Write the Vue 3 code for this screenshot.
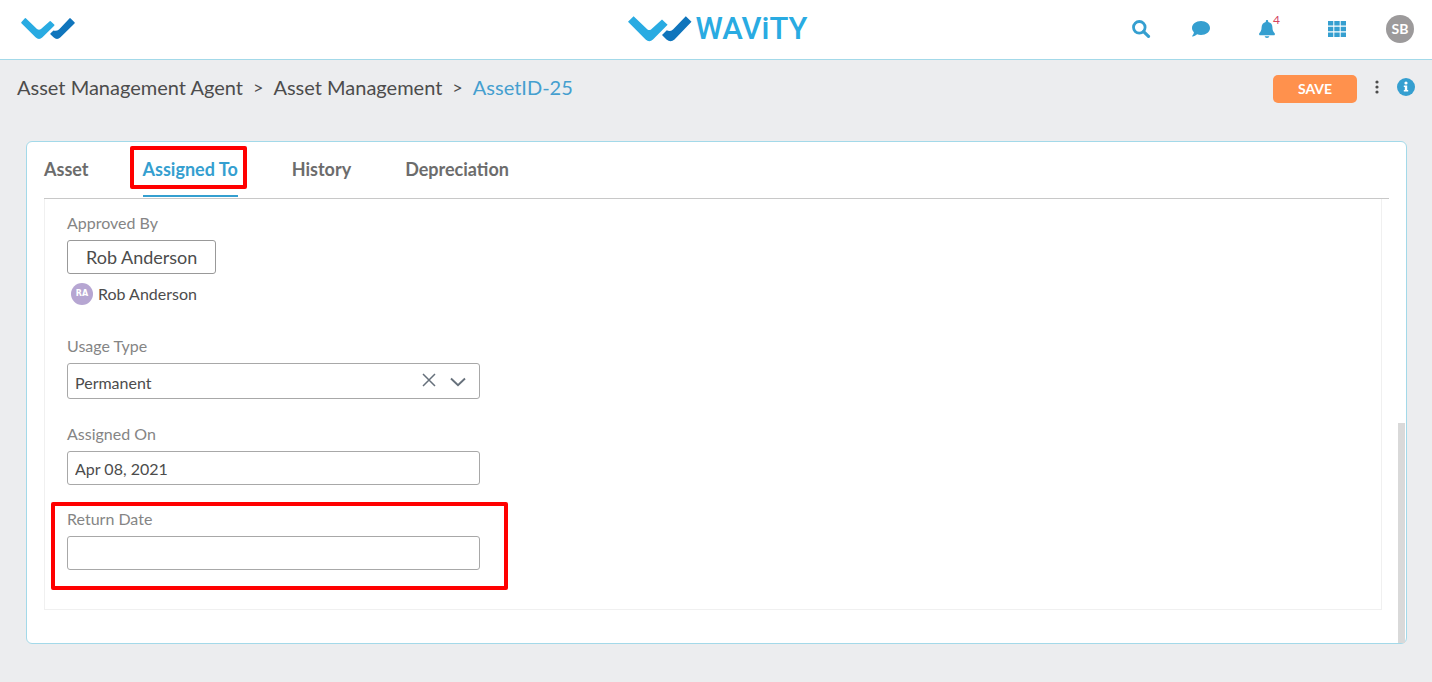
<script setup>
import { ref } from 'vue'

const tabs = ['Asset', 'Assigned To', 'History', 'Depreciation']
const active = ref('Assigned To')
const usage = ref('Permanent')
const assignedOn = ref('Apr 08, 2021')
const returnDate = ref('')
</script>

<template>
  <div class="page">
    <header class="topbar">
      <a href="#" class="mark" aria-label="Home">
        <svg width="54" height="22" viewBox="0 0 54 22">
          <path d="M3.900 0.300Q4.500 -0.100 5.100 0.400L16 10.900Q18 12.500 20 10.900L28.700 3.300Q29.400 2.800 30 3.400L33.200 6.400Q33.800 7 33.200 7.700L21.500 19.300Q18 22.600 14.500 19.300L0.400 5.200Q0 4.600 0.500 4Z" fill="#29abe2" />
          <path d="M49.400 0.300L53.500 4.200Q54 4.800 53.500 5.400L39.500 19.300Q36 22.600 32.500 19.300L29.600 16.600Q29 16 29.600 15.300L32.500 12.500Q35.500 13.400 38 11.400L48.400 0.400Q48.900 -0.100 49.400 0.300Z" fill="#1075bc" />
        </svg>
      </a>
      <a href="#" class="brand">
        <svg width="64" height="26" viewBox="0 0 64 26">
          <path d="M5.600 0.300L19.500 13.400Q21.200 14.600 23 13.400L34 3.400L39.600 8.800L25 23.600Q21.300 27 17.600 23.600L0 5.800Z" fill="#29abe2" />
          <path d="M57.800 0.300L63.500 5.700L46.500 23.600Q42.500 27 38.500 23.600L34 19L38.800 14.300Q42 16 45 13.400Z" fill="#1075bc" />
        </svg>
        <span class="brand-text">WAViTY</span>
      </a>
      <nav class="tools" aria-label="Tools">
        <button type="button" class="icon" aria-label="Search">
          <svg width="20" height="18" viewBox="0 0 20 18"><circle cx="7.300" cy="7.300" r="5.800" fill="none" stroke="#359fd0" stroke-width="2.800" /><path d="M11.600 11.600L16.500 16.300" stroke="#359fd0" stroke-width="3.200" stroke-linecap="round" /></svg>
        </button>
        <button type="button" class="icon" aria-label="Messages">
          <svg width="18" height="16" viewBox="0 0 18 16"><path d="M9 0C14 0 18 3.100 18 7S14 14 9 14C7.600 14 6.200 13.700 5.100 13.300C3.900 14.400 2.200 15.600 0.400 15.600C0 15.600 0 15.100 0.200 14.900C1.100 14 1.800 12.500 1.900 11.300C0.700 10.100 0 8.600 0 7C0 3.100 4 0 9 0Z" fill="#359fd0" /></svg>
        </button>
        <button type="button" class="icon bell" aria-label="Notifications">
          <svg width="16" height="18" viewBox="0 0 16 18"><path d="M8 0C8.700 0 9.200 0.500 9.200 1.200V1.900C11.700 2.400 13.400 4.500 13.400 7.300C13.400 10.600 14.300 11.600 15.500 12.900C16.300 13.800 15.900 15.300 14.800 15.300H1.200C0.100 15.300-0.300 13.800 0.500 12.900C1.700 11.600 2.600 10.600 2.600 7.300C2.600 4.500 4.300 2.400 6.800 1.900V1.200C6.800 0.500 7.300 0 8 0ZM5.700 16.300H10.300C10.100 17.400 9.200 18 8 18S5.900 17.400 5.700 16.300Z" fill="#359fd0" /></svg>
          <span class="count">4</span>
        </button>
        <button type="button" class="icon" aria-label="Apps">
          <svg width="18" height="16" viewBox="0 0 18 16" fill="#359fd0"><path d="M0 0h5.300v4.500H0zM6.300 0h5.400v4.500H6.300zM12.700 0h5.300v4.500h-5.300zM0 5.700h5.300v4.600H0zM6.300 5.700h5.400v4.600H6.300zM12.700 5.700h5.300v4.600h-5.300zM0 11.500h5.300V16H0zM6.300 11.500h5.400V16H6.300zM12.700 11.500h5.300V16h-5.300z" /></svg>
        </button>
        <button type="button" class="avatar">SB</button>
      </nav>
    </header>

    <div class="subbar">
      <nav class="crumbs" aria-label="Breadcrumb">
        <a href="#">Asset Management Agent</a>
        <span class="sep">&gt;</span>
        <a href="#">Asset Management</a>
        <span class="sep">&gt;</span>
        <a href="#" class="current">AssetID-25</a>
      </nav>
      <div class="actions">
        <button type="button" class="save">SAVE</button>
        <button type="button" class="icon more" aria-label="More">
          <svg width="4" height="14" viewBox="0 0 4 14" fill="#4c4c4c"><circle cx="2" cy="2" r="1.600" /><circle cx="2" cy="7" r="1.600" /><circle cx="2" cy="12" r="1.600" /></svg>
        </button>
        <button type="button" class="icon" aria-label="Info">
          <svg width="18" height="18" viewBox="0 0 18 18"><circle cx="9" cy="9" r="9" fill="#359fd0" /><circle cx="9" cy="5" r="1.600" fill="#fff" /><path d="M6.800 7.500H10.200V12H11.200V13.600H6.800V12H7.800V9.100H6.800Z" fill="#fff" /></svg>
        </button>
      </div>
    </div>

    <main class="card">
      <div class="tabs" role="tablist">
        <button
          v-for="t in tabs"
          :key="t"
          type="button"
          role="tab"
          :aria-selected="t === active"
          :class="['tab', { active: t === active }]"
          @click="active = t"
        >{{ t }}<span v-if="t === 'Assigned To'" class="callout tab-callout"></span></button>
      </div>
      <form class="panel" @submit.prevent>
        <div class="field approver">
          <label for="approved">Approved By</label>
          <button id="approved" type="button" class="person">Rob Anderson</button>
          <div class="chip"><span class="initials">RA</span>Rob Anderson</div>
        </div>
        <div class="field">
          <label for="usage">Usage Type</label>
          <div class="select-wrap">
            <select id="usage" v-model="usage">
              <option value=""></option>
              <option>Permanent</option>
              <option>Temporary</option>
            </select>
            <button type="button" class="icon clear" aria-label="Clear" @click="usage = ''">
              <svg width="14" height="14" viewBox="0 0 14 14"><path d="M1 1L13 13M13 1L1 13" stroke="#66707b" stroke-width="1.500" /></svg>
            </button>
            <svg class="chevron" width="16" height="10" viewBox="0 0 16 10"><path d="M1 1.500L8 8.300L15 1.500" fill="none" stroke="#66707b" stroke-width="1.900" /></svg>
          </div>
        </div>
        <div class="field">
          <label for="assigned">Assigned On</label>
          <input id="assigned" v-model="assignedOn" type="text" />
        </div>
        <div class="field">
          <label for="return">Return Date</label>
          <input id="return" v-model="returnDate" type="text" />
          <span class="callout field-callout"></span>
        </div>
      </form>
      <span class="thumb"></span>
    </main>
  </div>
</template>

<style>
body {
  background: #ecedef;
}
</style>

<style scoped>
.page {
  font-family: Lato, "Liberation Sans", sans-serif;
  color: #4c4c4c;
  font-size: 16px;
  line-height: 20px;
  padding-bottom: 38px;
}
.page *,
.page {
  box-sizing: border-box;
}
button,
input,
select {
  font: inherit;
  color: inherit;
  margin: 0;
}
button {
  border: 0;
  background: none;
  padding: 0;
  cursor: pointer;
}
a {
  color: inherit;
  text-decoration: none;
}
svg {
  display: block;
}
.topbar {
  display: grid;
  grid-template-columns: 1fr auto 1fr;
  align-items: center;
  height: 60px;
  padding: 0 18px 2px 21px;
  background: #fff;
  border-bottom: 1px solid #a3d9e9;
}
.mark {
  justify-self: start;
}
.brand {
  display: flex;
  align-items: center;
  gap: 4px;
}
.brand-text {
  font-family: Roboto, "Liberation Sans", sans-serif;
  font-size: 31px;
  line-height: 32px;
  font-weight: 500;
  color: #29abe2;
}
.tools {
  display: flex;
  align-items: center;
  justify-self: end;
  gap: 40px;
}
.icon {
  position: relative;
  display: block;
}
.bell {
  margin: 0 13px 0 9px;
}
.count {
  position: absolute;
  left: 14px;
  top: -8px;
  font-size: 12px;
  line-height: 16px;
  color: #d5455f;
}
.avatar {
  width: 28px;
  height: 28px;
  border-radius: 50%;
  background: #9c9a9b;
  color: #fff;
  font-size: 14px;
  font-weight: 700;
}
.subbar {
  display: flex;
  align-items: center;
  justify-content: space-between;
  height: 56px;
  padding: 0 17px 2px;
}
.crumbs {
  display: flex;
  align-items: center;
  gap: 10px;
  font-size: 20px;
  line-height: 24px;
}
.sep {
  font-size: 18px;
}
.current {
  color: #459fcf;
}
.actions {
  display: flex;
  align-items: center;
  gap: 18px;
}
.save {
  width: 84px;
  height: 28px;
  margin-top: 4px;
  border-radius: 5px;
  background: #ff914d;
  color: #fff;
  font-size: 14px;
  font-weight: 700;
}
.card {
  position: relative;
  margin: 25px 25px 0 26px;
  padding: 0 17px 33px;
  background: #fff;
  border: 1px solid #a3d9e9;
  border-radius: 6px;
}
.tabs {
  display: flex;
  gap: 54px;
  height: 57px;
  border-bottom: 1px solid #c8c8c8;
}
.tab {
  position: relative;
  height: 55px;
  font-size: 18px;
  font-weight: 700;
  color: #6c6c6c;
  border-bottom: 2px solid transparent;
}
.tab.active {
  color: #359fd0;
  border-bottom-color: #359fd0;
}
.callout {
  position: absolute;
  border: 4px solid #f00;
  border-radius: 2px;
  pointer-events: none;
}
.tab-callout {
  inset: 4px -9px 6px -13px;
}
.panel {
  display: flex;
  flex-direction: column;
  gap: 24px;
  margin-right: 7px;
  padding: 14px 22px 39px;
  border: 1px solid #f0f0f0;
  border-top: 0;
}
.field {
  position: relative;
  display: flex;
  flex-direction: column;
  gap: 7px;
  width: 413px;
}
.approver {
  padding-bottom: 7px;
}
label {
  color: #858585;
}
input,
select {
  width: 100%;
  height: 34px;
  padding: 0 7px;
  background: #fff;
  border: 1px solid #a8a8a8;
  border-radius: 3px;
}
.person {
  align-self: flex-start;
  height: 34px;
  padding: 0 18px;
  border: 1px solid #999;
  border-radius: 3px;
  font-size: 18px;
}
.chip {
  display: flex;
  align-items: center;
  gap: 5px;
  padding: 2px 4px 0;
}
.initials {
  width: 22px;
  height: 22px;
  border-radius: 50%;
  background: #b6a6d2;
  color: #fff;
  font-family: "DejaVu Sans", sans-serif;
  font-size: 8px;
  line-height: 22px;
  font-weight: 700;
  text-align: center;
}
.select-wrap {
  position: relative;
  padding-bottom: 1px;
}
select {
  display: block;
  appearance: none;
  height: 36px;
  padding: 4px 7px 0;
}
.clear {
  position: absolute;
  right: 44px;
  top: 10px;
}
.chevron {
  position: absolute;
  right: 14px;
  top: 14px;
  pointer-events: none;
}
.field-callout {
  inset: -7px -28px -20px -16px;
}
.thumb {
  position: absolute;
  right: 1px;
  bottom: 0;
  width: 7px;
  height: 220px;
  background: #d9d9d9;
}
</style>
